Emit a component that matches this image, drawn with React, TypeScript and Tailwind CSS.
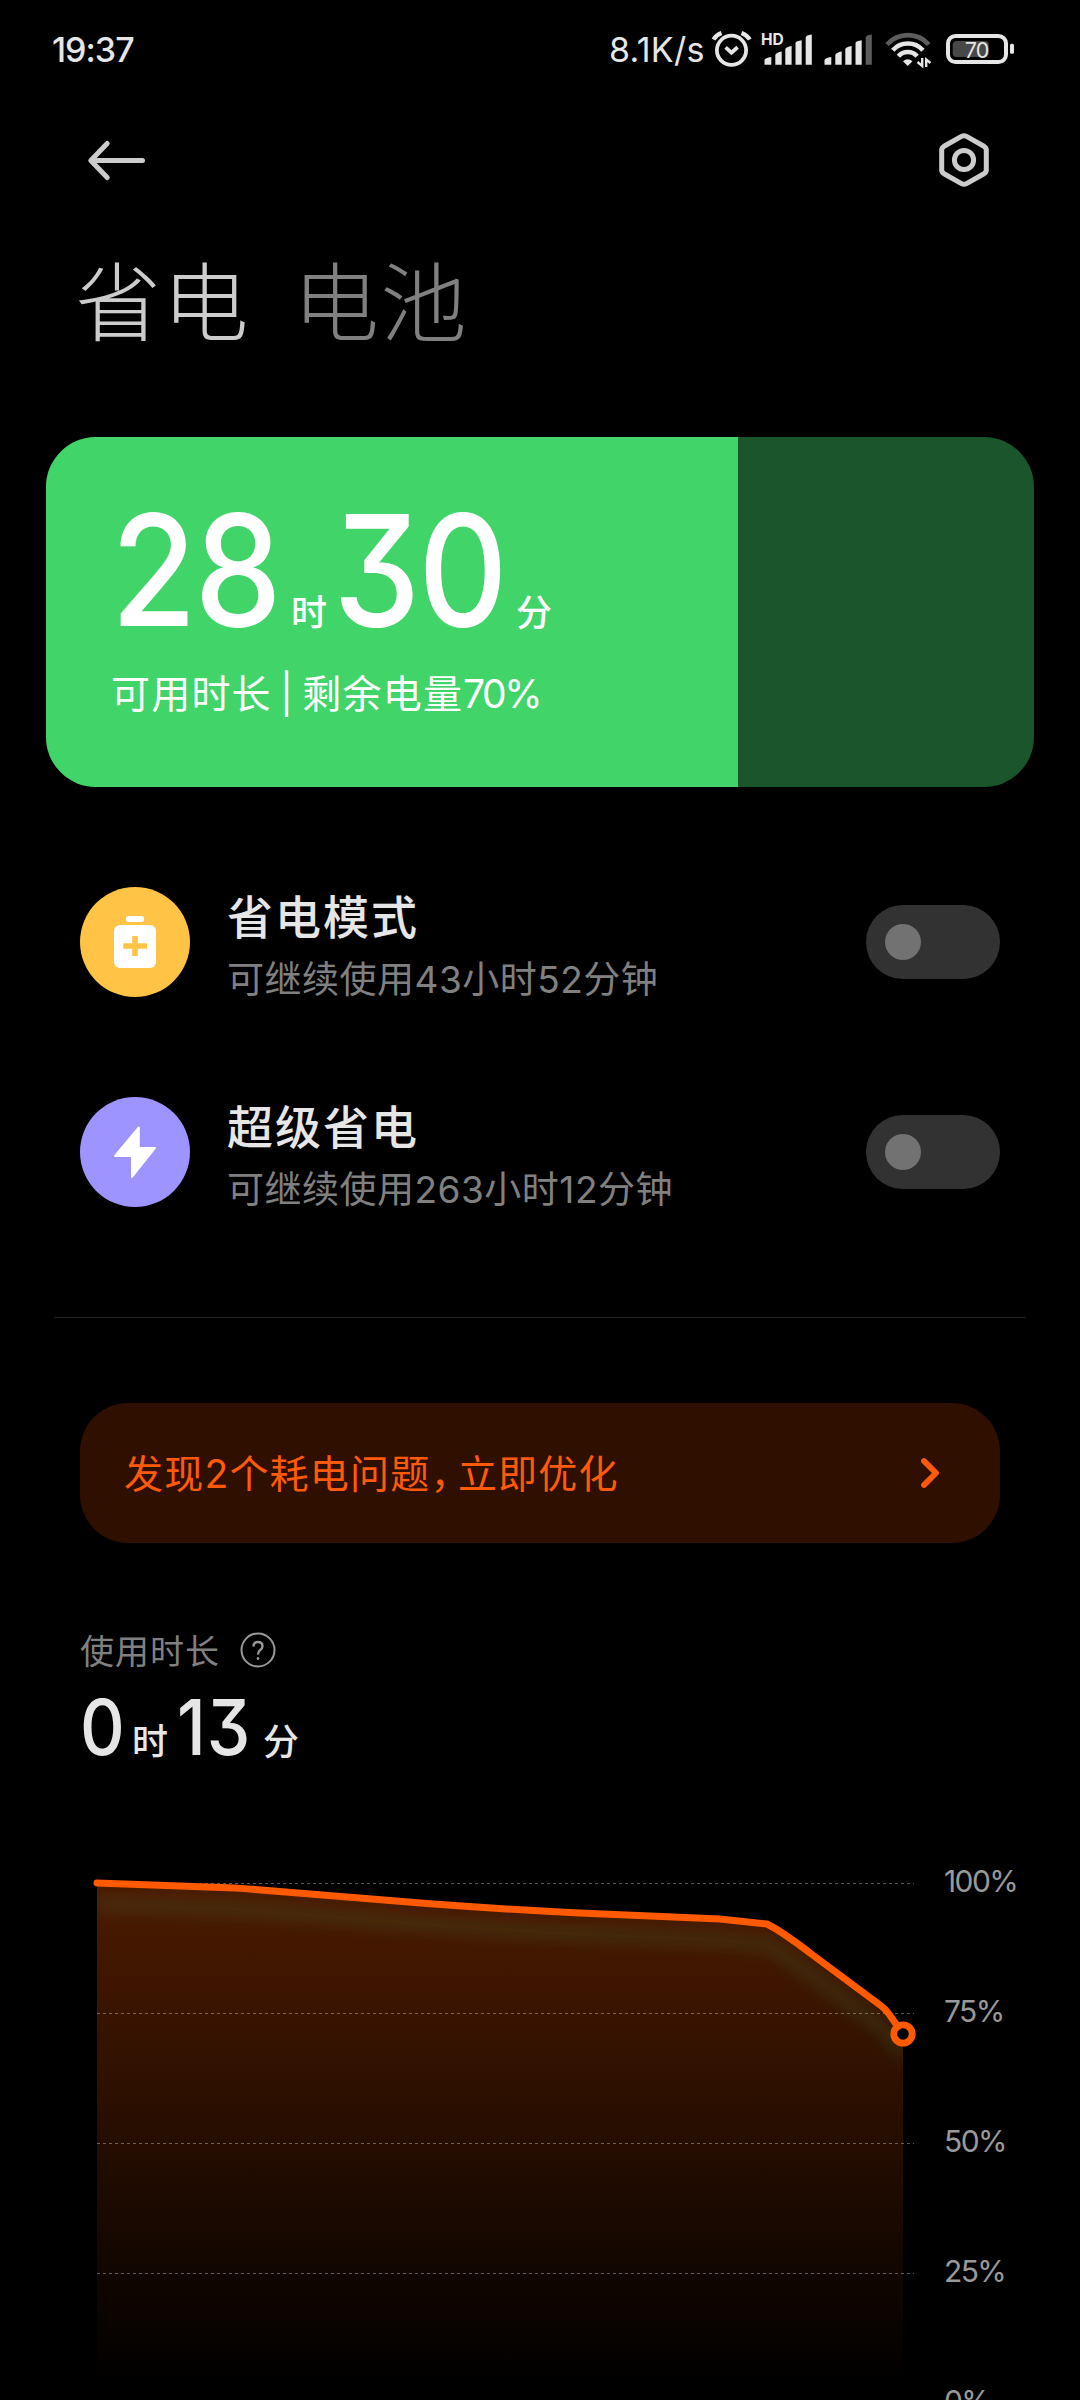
import React from 'react';

const LATIN = "font-['Inter','Noto_Sans_CJK_SC',sans-serif]";

const StatusBar: React.FC = () => (
  <div className="h-[100px] flex items-center pl-[52px] pr-[60px] text-[#e6e6e6]">
    <span className="flex-1 text-[34px] leading-none font-medium tracking-[-1px]">19:37</span>
    <span className="text-[34px] leading-none tracking-[0.3px] w-[101px] whitespace-nowrap">8.1K/s</span>
    <svg width="310" height="60" viewBox="710 20 310 60" fill="none" className="shrink-0">
      {/* Alarm */}
      <g stroke="#e6e6e6" strokeWidth="3.8">
        <circle cx="731.5" cy="50.3" r="14.6" />
        <path d="M713.5 39.5Q716 35 721.5 33M741.5 33Q747 35 749.8 39.5" strokeWidth="4.2" />
        <path d="M725.6 47.3L731.5 52.6L737.6 47.3" />
      </g>
      {/* SIM 1 */}
      <text x="761" y="44.8" fill="#e6e6e6" fontSize="15.5" fontWeight="700">HD</text>
      <g fill="#e6e6e6">
        <path d="M764.5 60Q765 58 771.3 57V64.7H764.5Z" />
        <path d="M775.3 55Q776 52.5 781.7 51.5V64.7H775.3Z" />
        <path d="M785.3 49Q786 47 791.6 46V64.7H785.3Z" />
        <path d="M795.5 43Q796 41 801.7 40.3V64.7H795.5Z" />
        <path d="M805.7 37.5Q806 35 811.8 34.5V64.7H805.7Z" />
      </g>
      {/* SIM 2 */}
      <g fill="#e6e6e6">
        <path d="M824.5 60Q825 58 831.3 57V64.7H824.5Z" />
        <path d="M835.3 55Q836 52.5 841.7 51.5V64.7H835.3Z" />
        <path d="M845.3 49Q846 47 851.6 46V64.7H845.3Z" />
        <path d="M855.5 43Q856 41 861.7 40.3V64.7H855.5Z" />
        <path d="M865.7 37.5Q866 35 871.8 34.5V64.7H865.7Z" fill="#5c5c5c" />
      </g>
      {/* Wifi */}
      <path d="M887 44.5A28 28 0 0 1 928.8 44.5" stroke="#5c5c5c" strokeWidth="4.6" />
      <path d="M892.8 50.3A20.2 20.2 0 0 1 922.9 50.3" stroke="#e6e6e6" strokeWidth="4.6" />
      <path d="M898.4 56.2A12.4 12.4 0 0 1 917.1 56.2" stroke="#e6e6e6" strokeWidth="4.6" />
      <path d="M903 61.3Q907.7 57 912.5 61.3L907.7 66Z" fill="#e6e6e6" />
      <path d="M922.2 58V66L917.5 62M926.2 67V59.5L930.5 63" stroke="#e6e6e6" strokeWidth="2.4" />
      {/* Battery */}
      <rect x="952.7" y="41" width="36" height="16" rx="4" fill="#484848" />
      <rect x="948" y="36" width="58" height="26" rx="7.5" stroke="#e6e6e6" strokeWidth="4" />
      <rect x="1010" y="43.7" width="4" height="10" rx="1.5" fill="#e6e6e6" />
      <text x="976.5" y="57.6" fill="#e6e6e6" fontSize="21.5" textAnchor="middle" letterSpacing="-1">70</text>
    </svg>
  </div>
);

const TopBar: React.FC = () => (
  <div className="h-[120px] flex items-center justify-between pl-[80px] pr-[86px]">
    <svg width="70" height="60" viewBox="80 130 70 60" fill="none" stroke="#cccccc" strokeWidth="5" strokeLinecap="round" strokeLinejoin="round">
      <path d="M142.5 160.5H91.5M107.2 143.5L90.8 160.5L107.2 177.5" />
    </svg>
    <svg width="60" height="60" viewBox="934 130 60 60" fill="none" stroke="#cccccc" strokeWidth="5" strokeLinejoin="round">
      <path d="M961.5 136.4Q964 135 966.5 136.4L984 146.3Q986.3 147.7 986.3 150V170Q986.3 172.3 984 173.7L966.5 183.6Q964 185 961.5 183.6L944 173.7Q941.7 172.3 941.7 170V150Q941.7 147.7 944 146.3Z" />
      <circle cx="964" cy="160" r="9.6" />
    </svg>
  </div>
);

interface DurationProps {
  hours: string;
  minutes: string;
  big?: boolean;
}

// Hours and minutes with the small unit characters after each number
const Duration: React.FC<DurationProps> = ({ hours, minutes, big }) => {
  const box = big ? 'h-[118px] text-[154px]' : 'h-[60px] text-[77px]';
  const digits = "font-[450] [font-feature-settings:'cv09'] leading-none inline-block origin-left scale-x-[0.9]";
  const unit = 'text-[36px] leading-none font-medium';
  return (
    <div className={`flex items-baseline whitespace-nowrap ${box}`}>
      <span className={`${digits} ${big ? 'w-[180px] tracking-[-2px]' : 'w-[52px]'}`}>{hours}</span>
      <span className={`${unit} ${big ? 'w-[42px]' : 'w-[45px]'}`}>时</span>
      <span className={`${digits} ${big ? 'w-[183px] tracking-[-2px]' : 'w-[86px] tracking-[1px]'}`}>{minutes}</span>
      <span className={unit}>分</span>
    </div>
  );
};

const BatteryCard: React.FC = () => (
  <div className="mx-[46px] h-[350px] rounded-[50px] overflow-hidden bg-[#1b552b] flex text-white">
    <div className="w-[70%] bg-[#41d469] pl-[65px] pt-[56px]">
      <Duration hours="28" minutes="30" big />
      <div className="mt-[55px] text-[39px] leading-[56px] tracking-[1.2px] whitespace-nowrap [word-spacing:-4px]">
        可用时长 | 剩余电量<span className="tracking-[-2.5px]">70%</span>
      </div>
    </div>
  </div>
);

interface ModeRowProps {
  title: string;
  desc: string;
  color: string;
  icon: React.ReactNode;
}

const ModeRow: React.FC<ModeRowProps> = ({ title, desc, color, icon }) => (
  <div className="h-[210px] flex items-center px-[80px]">
    <div className={`w-[110px] h-[110px] rounded-full flex items-center justify-center ${color}`}>{icon}</div>
    <div className="flex-1 pl-[37px] pt-[15px]">
      <div className="text-[46px] leading-[61px] font-medium tracking-[2px] text-[#e6e6e6]">{title}</div>
      <div className="text-[37px] leading-[64px] tracking-[0.5px] text-[#808080]">{desc}</div>
    </div>
    <div className="w-[134px] h-[74px] rounded-full bg-[#323232] flex items-center pl-[19px]">
      <div className="w-[36px] h-[36px] rounded-full bg-[#727272]" />
    </div>
  </div>
);

const SaverIcon = (
  <svg width="60" height="60" viewBox="105 912 60 60">
    <rect x="126" y="916" width="18" height="6" rx="2" fill="#fff" />
    <rect x="114" y="925" width="42" height="43" rx="6" fill="#fff" />
    <path d="M135 936V956M123.2 946H147" stroke="#ffc446" strokeWidth="5.6" />
  </svg>
);

const BoltIcon = (
  <svg width="60" height="60" viewBox="105 1122 60 60">
    <path d="M138.8 1127.5V1148H155L132 1177V1156H115Z" fill="#fff" stroke="#fff" strokeWidth="2" strokeLinejoin="round" />
  </svg>
);

const LABELS = ['100%', '75%', '50%', '25%', '0%'];
const CURVE = 'M97 1883L235 1888Q245 1888.5 255 1889.5L427 1903.5Q500 1909 580 1913L720 1919L767 1924Q775 1928 783 1933.5Q800 1945 810 1953L880 2005Q885 2008.5 889 2014L903 2034';

const Chart: React.FC = () => (
  <div className="flex h-[550px] overflow-hidden">
    <svg width="944" height="550" viewBox="0 1850 944 550" fill="none" className="shrink-0">
      <defs>
        <linearGradient id="area" gradientUnits="userSpaceOnUse" x1="0" y1="1883" x2="0" y2="2385">
          <stop offset="0" stopColor="#4d1b00" />
          <stop offset="1" stopColor="#4d1b00" stopOpacity="0" />
        </linearGradient>
        <filter id="glow" filterUnits="userSpaceOnUse" x="60" y="1850" width="885" height="260">
          <feGaussianBlur stdDeviation="7" />
        </filter>
        <clipPath id="under">
          <path d={`${CURVE}V2400H97Z`} />
        </clipPath>
      </defs>
      <path d={`${CURVE}V2400H97Z`} fill="url(#area)" />
      <g clipPath="url(#under)">
        <path d={CURVE} transform="translate(0 21)" stroke="#3c8250" strokeOpacity="0.18" strokeWidth="16" filter="url(#glow)" />
      </g>
      {[1883.5, 2013.5, 2143.5, 2273.5].map(y => (
        <path key={y} d={`M97 ${y}H914`} stroke="#fff" strokeOpacity="0.34" strokeDasharray="3 3" />
      ))}
      <path d={CURVE} stroke="#ff5a00" strokeWidth="7" strokeLinecap="round" strokeLinejoin="round" />
      <circle cx="903" cy="2034" r="9.2" fill="#000" stroke="#ff5a00" strokeWidth="6.8" />
    </svg>
    <div className="pt-[11px] text-[#999999] text-[30px] tracking-[-1.6px]">
      {LABELS.map(label => (
        <div key={label} className="h-[130px] leading-[40px]">{label}</div>
      ))}
    </div>
  </div>
);

export default function App() {
  return (
    <div className={`w-[1080px] h-[2400px] overflow-hidden bg-black ${LATIN}`}>
      <StatusBar />
      <TopBar />

      <div className="h-[217px] pl-[75px] pt-[18px] flex gap-[43px] text-[86px] leading-[120px] font-light tracking-[1.5px] font-['Noto_Sans_CJK_SC',sans-serif]">
        <span className="text-[#cccccc]">省电</span>
        <span className="text-[#808080]">电池</span>
      </div>

      <BatteryCard />

      <div className="mt-[50px]">
        <ModeRow title="省电模式" desc="可继续使用43小时52分钟" color="bg-[#ffc446]" icon={SaverIcon} />
        <ModeRow title="超级省电" desc="可继续使用263小时12分钟" color="bg-[#9e94ff]" icon={BoltIcon} />
      </div>

      <div className="mt-[60px] mx-[54px] h-px bg-[#222222]" />

      <div className="mt-[85px] mx-[80px] h-[140px] rounded-[48px] bg-[#2e0f00] flex items-center justify-between pl-[44px] pr-[56px] text-[#ff5a0a]">
        <span className="pt-[3px] text-[39px] tracking-[1.2px]">发现2个耗电问题<span className="tracking-[-11.5px]">，</span>立即优化</span>
        <svg width="28" height="40" viewBox="0 0 28 40" fill="none" stroke="currentColor" strokeWidth="5.8" strokeLinecap="round" strokeLinejoin="round">
          <path d="M8 8L20 20L8 32" />
        </svg>
      </div>

      <div className="pt-[82px] px-[80px] h-[307px]">
        <div className="flex items-center gap-[20px] h-[50px] text-[#808080] text-[34px] tracking-[1px]">
          <span className="pt-[2px]">使用时长</span>
          <svg width="36" height="36" viewBox="0 0 36 36" fill="none" stroke="#999999" strokeWidth="2">
            <circle cx="18" cy="18" r="16.5" />
            <path d="M13.5 14.5Q13.5 10 18 10Q22.5 10 22.5 14.3Q22.5 16.5 20 18.3Q18 19.7 18 22.5" strokeWidth="2.4" />
            <circle cx="18" cy="26.5" r="1" fill="#999999" strokeWidth="1" />
          </svg>
        </div>
        <div className="mt-[14px] text-[#e6e6e6]">
          <Duration hours="0" minutes="13" />
        </div>
      </div>

      <Chart />
    </div>
  );
}
